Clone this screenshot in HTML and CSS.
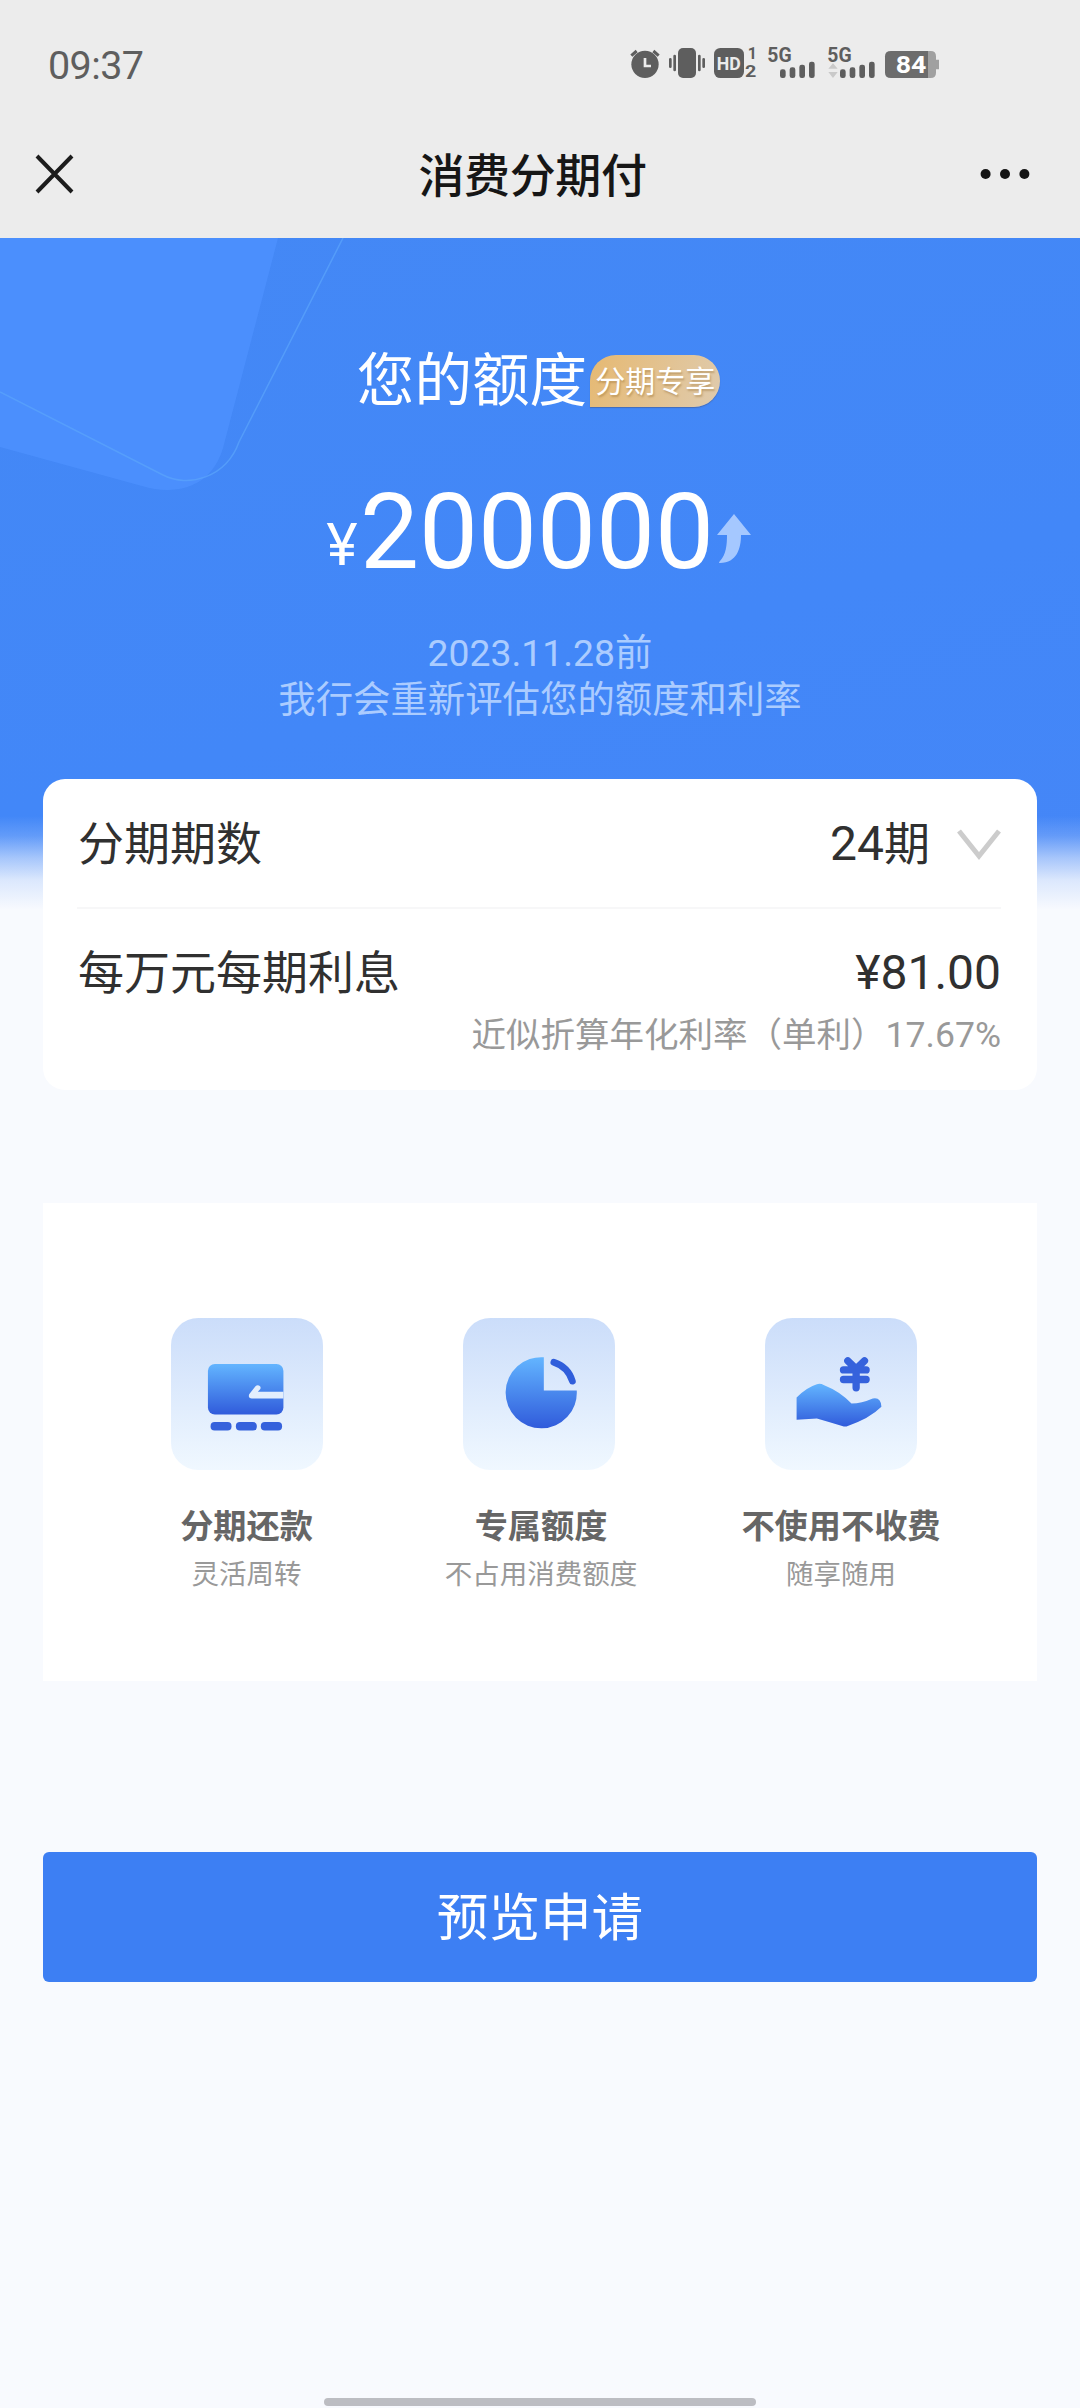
FILE: index.html
```html
<!DOCTYPE html>
<html lang="zh-CN">
<head>
<meta charset="utf-8">
<title>消费分期付</title>
<link rel="stylesheet" href="styles.css">
</head>
<body>
<div class="page">
  <header class="top">
    <div class="status">
      <span class="clock">09:37</span>
      <svg class="status-icons" viewBox="0 0 1080 210" fill="#5e5e5e">
        <circle cx="135" cy="103" r="41"/>
        <path d="M94 77L110 63M176 77L160 63" stroke="#5e5e5e" stroke-width="9"/>
        <path d="M135 84V108H153" fill="none" stroke="#ececec" stroke-width="8"/>
        <rect x="234" y="54" width="54" height="90" rx="15"/>
        <path d="M211 88V110M224 78V120M298 78V120M311 88V110" stroke="#5e5e5e" stroke-width="8" stroke-linecap="round"/>
        <rect x="342" y="54" width="90" height="90" rx="19"/>
        <text class="hd" x="350" y="119" textLength="72" lengthAdjust="spacingAndGlyphs">HD</text>
        <text class="slot" x="443" y="88">1</text>
        <text class="slot" x="435" y="141" textLength="34" lengthAdjust="spacingAndGlyphs">2</text>
        <text class="net" x="502" y="97" textLength="73" lengthAdjust="spacingAndGlyphs">5G</text>
        <g id="bars">
          <rect x="540" y="118" width="17" height="26" rx="7"/>
          <rect x="569" y="112" width="17" height="32" rx="7"/>
          <rect x="598" y="104" width="17" height="40" rx="7"/>
          <rect x="627" y="95" width="17" height="49" rx="7"/>
        </g>
        <text class="net" x="682" y="97" textLength="73" lengthAdjust="spacingAndGlyphs">5G</text>
        <use href="#bars" x="180"/>
        <path d="M699 100L713 116H685ZM699 144L713 126H685Z" fill="#c9c9c9"/>
        <path d="M984 63H992Q1008 63 1008 79V89H1017V118H1008V128Q1008 144 992 144H984Z" fill="#a0a0a0"/>
        <path d="M984 63H873Q855 63 855 79V128Q855 144 873 144H984Z" fill="#6c6c6c"/>
        <text class="level" x="887" y="130" textLength="92" lengthAdjust="spacingAndGlyphs">84</text>
      </svg>
    </div>
    <div class="nav">
      <svg class="close" viewBox="0 0 40 40"><path d="M2 2L37 38M37 2L2 38" stroke="#1c1c1c" stroke-width="4"/></svg>
      <h1 class="title">消费分期付</h1>
      <svg class="more" viewBox="0 0 50 12" fill="#161616"><circle cx="5.6" cy="6" r="5"/><circle cx="25" cy="6" r="5"/><circle cx="44.4" cy="6" r="5"/></svg>
    </div>
  </header>
  <main class="body">
    <section class="hero">
      <svg class="decor" viewBox="0 0 400 300">
        <path d="M0 0H278L223 210C215 237 195 252 167 252Q155 252 142 248L0 209Z" fill="#4c90fe" opacity=".85"/>
        <path d="M343 0L239 204C226 240 188 250 163 237L0 154" fill="none" stroke="#5aa3fb" stroke-width="1.5" opacity=".75"/>
      </svg>
      <div class="heading"><span>您的额度</span><span class="badge">分期专享</span></div>
      <div class="amount"><span class="yen">¥</span><span class="sum">200000</span>
        <svg class="up" viewBox="0 0 34 50"><path d="M17 0L34 21H24C24 34 20 49 3 49Q1 49 3 47C9 41 10 31 10 21H0Z" fill="#a5c8ff"/></svg>
      </div>
      <div class="note">
        <p><span class="date">2023.11.28</span>前</p>
        <p>我行会重新评估您的额度和利率</p>
      </div>
    </section>
    <section class="card plan">
      <div class="row term">
        <span>分期期数</span>
        <div class="value"><span><span class="num">24</span>期</span><svg class="chevron" viewBox="0 0 46 32"><path d="M3 2L23 27L43 2" fill="none" stroke="#ccc" stroke-width="5"/></svg></div>
      </div>
      <div class="row interest">
        <span>每万元每期利息</span>
        <span class="num">¥81.00</span>
      </div>
      <p class="apr">近似折算年化利率（单利）<span class="rate">17.67%</span></p>
    </section>
    <section class="card features">
      <div class="feature">
        <svg class="tile" viewBox="91 85 457 457">
          <defs>
            <linearGradient id="bg" x1="0" y1="0" x2="0" y2="1"><stop offset="0" stop-color="#cbddfa"/><stop offset="1" stop-color="#f0f8ff"/></linearGradient>
            <linearGradient id="fg" x1="0" y1="0" x2="0" y2="1"><stop offset="0" stop-color="#63b5ff"/><stop offset="1" stop-color="#305bdb"/></linearGradient>
          </defs>
          <rect x="91" y="85" width="457" height="457" rx="82" fill="url(#bg)"/>
          <rect x="202" y="223" width="227" height="152" rx="21" fill="url(#fg)"/>
          <path d="M429 307H352L359 299C365 290 352 283 345 290L326 314Q322 327 334 327H429Z" fill="#e3eefd"/>
          <g fill="#3562dc"><rect x="210" y="398" width="63" height="25" rx="12"/><rect x="286" y="398" width="63" height="25" rx="12"/><rect x="361" y="398" width="64" height="25" rx="12"/></g>
        </svg>
        <h2>分期还款</h2>
        <p>灵活周转</p>
      </div>
      <div class="feature middle">
        <svg class="tile" viewBox="99 55 457 457">
          <rect x="99" y="55" width="457" height="457" rx="82" fill="url(#bg)"/>
          <path d="M342 173V273H441A107 107 0 1 1 342 173Z" fill="url(#fg)"/>
          <path d="M372 188Q415 202 428 245" fill="none" stroke="#305edb" stroke-width="20" stroke-linecap="round"/>
        </svg>
        <h2>专属额度</h2>
        <p>不占用消费额度</p>
      </div>
      <div class="feature">
        <svg class="tile" viewBox="616 85 457 457">
          <rect x="616" y="85" width="457" height="457" rx="82" fill="url(#bg)"/>
          <path d="M711 324Q740 294 772 284Q782 281 794 287Q842 306 876 342Q906 342 940 327Q965 322 966 352Q930 388 861 411H853Q810 398 772 387L711 391Z" fill="url(#fg)"/>
          <path d="M865 214L890 238L915 214M852 241H920M852 270H920M890 241V295" fill="none" stroke="#3562dc" stroke-width="22" stroke-linecap="round"/>
        </svg>
        <h2>不使用不收费</h2>
        <p>随享随用</p>
      </div>
    </section>
    <button class="submit">预览申请</button>
    <div class="home-bar"></div>
  </main>
</div>
</body>
</html>
```

FILE: styles.css
```css
* { box-sizing: border-box; margin: 0; padding: 0; }
body { font-family: "Noto Sans CJK SC", sans-serif; color: #303030; background: #f8fafe; }
.page { width: 1080px; height: 2408px; display: flex; flex-direction: column; overflow: hidden; }

.top { height: 238px; background: #ececec; flex: none; }
.status { height: 110px; padding: 30px 120px 0 48px; display: flex; justify-content: space-between; align-items: flex-start; }
.clock { font: 400 39.5px/72px Roboto, sans-serif; color: #5e5e5e; letter-spacing: -0.6px; }
.status-icons { width: 360px; height: 70px; }
.status-icons text { font-family: Roboto, sans-serif; font-weight: 700; }
.hd { font-size: 54px; fill: #ececec; }
.slot { font-size: 48px; }
.net { font-size: 60px; }
.level { font-size: 70px; fill: #fff; }

.nav { height: 128px; padding: 0 50px 0 35px; display: grid; grid-template-columns: 85px 1fr 85px; align-items: center; }
.close { width: 40px; height: 40px; }
.title { font-size: 46px; line-height: 60px; font-weight: 500; color: #161616; text-align: center; letter-spacing: -0.4px; padding-bottom: 4px; }
.more { width: 50px; height: 12px; justify-self: end; }

.body { flex: 1; display: flex; flex-direction: column; align-items: center; background: #f8fafe; }
.hero {
  position: relative; width: 1080px; height: 672px; flex: none; margin-bottom: -131px; padding-top: 105px; color: #fff;
  display: flex; flex-direction: column; align-items: center;
  background:
    linear-gradient(to bottom, rgba(248,250,254,0) 578px, rgba(248,250,254,.18) 598px, rgba(248,250,254,.55) 620px, rgba(248,250,254,.84) 642px, #f8fafe 672px),
    linear-gradient(165deg, #4488f5 0%, #4287f8 60%, #4586f7 100%);
}
.decor { position: absolute; left: 0; top: 0; width: 400px; height: 300px; }
.heading { height: 66px; display: flex; align-items: center; font-size: 57.6px; line-height: 66px; gap: 3px; margin-right: 3px; }
.badge {
  width: 130px; height: 52px; margin-top: 9px; border-radius: 26px 26px 26px 0; text-align: center;
  font-size: 30px; line-height: 49px; text-shadow: 1px 2px 2px rgba(150,110,50,.45);
  background: linear-gradient(110deg, #e6b972, #dfcbae); box-shadow: 0 1px 1px rgba(70,80,120,.5);
}
.amount { height: 120px; margin: 64px 5px 0 0; display: flex; align-items: baseline; }
.yen { width: 36px; display: flex; justify-content: center; font: 400 58px/120px Inter, sans-serif; transform: translateY(-3px); }
.sum { font: 400 105px/120px Roboto, sans-serif; }
.up { width: 34px; height: 50px; margin: 41px 0 0 3px; align-self: flex-start; }
.note { margin-top: 35px; font-size: 37.4px; line-height: 44px; text-align: center; color: #abccff; }
.date { font-family: Roboto, sans-serif; font-size: 37.3px; }

.card { width: 994px; background: #fff; flex: none; }
/* Stacks above the hero, whose faded lower edge runs behind this card. */
.plan { position: relative; height: 311px; border-radius: 22px; padding: 0 36px 0 34px; font-size: 46px; line-height: 60px; }
.row { display: flex; justify-content: space-between; align-items: baseline; }
.row > :first-child { padding-left: 1px; }
.term { height: 130px; padding-top: 31px; border-bottom: 2px solid #f7f7f8; }
.interest { height: 90px; padding-top: 30px; }
.value { display: flex; align-items: flex-start; }
.num { font-family: Roboto, sans-serif; font-size: 48px; line-height: 60px; }
.chevron { width: 46px; height: 32px; margin: 19px -1px 0 26px; }
.apr { font-size: 34.5px; line-height: 46px; margin-top: 10px; text-align: right; color: #999; }
.rate { font-family: Roboto, sans-serif; font-size: 35.6px; }

.features { height: 478px; margin-top: 113px; padding: 115px 44px 0 57px; display: grid; grid-template-columns: 293px 296px 304px; align-content: start; }
.feature { display: flex; flex-direction: column; align-items: center; }
.tile { width: 152px; height: 152px; }
.middle .tile { margin-left: -4px; }
.feature h2 { margin-top: 34px; font-size: 33.2px; line-height: 40px; font-weight: 700; color: #666; }
.feature p { margin-top: 10px; font-size: 27.5px; line-height: 36px; color: #999; }

.submit { width: 994px; height: 130px; margin-top: 171px; padding-bottom: 6px; border: 0; border-radius: 6px; background: #3d7ff3; color: #fff; font: 400 51.6px/60px "Noto Sans CJK SC", sans-serif; flex: none; }
.home-bar { width: 432px; height: 8px; margin-top: auto; margin-bottom: 2px; border-radius: 4px; background: #bcbdc2; }
```
